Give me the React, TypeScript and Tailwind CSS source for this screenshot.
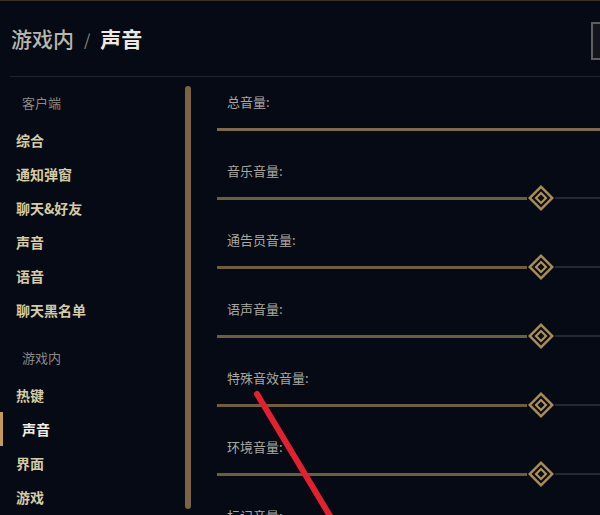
import React from "react";

const clientItems = ["综合", "通知弹窗", "聊天&好友", "声音", "语音", "聊天黑名单"];
const gameItems = ["热键", "声音", "界面", "游戏"];

// null = full track, thumb scrolled out of view
const sliders: { label: string; full?: boolean }[] = [
  { label: "总音量:", full: true },
  { label: "音乐音量:" },
  { label: "通告员音量:" },
  { label: "语声音量:" },
  { label: "特殊音效音量:" },
  { label: "环境音量:" },
  { label: "标记音量:" },
];

function Thumb() {
  return (
    <svg width="28" height="28" viewBox="0 0 28 28" className="shrink-0">
      <path d="M14 1 L27 14 L14 27 L1 14 Z" fill="#a98c55" />
      <path d="M14 4.5 L23.5 14 L14 23.5 L4.5 14 Z" fill="#0a0d14" />
      <path d="M14 7.5 L20.5 14 L14 20.5 L7.5 14 Z" fill="#b0935a" />
      <path d="M14 10.5 L17.5 14 L14 17.5 L10.5 14 Z" fill="#0a0d14" />
    </svg>
  );
}

function Slider({ full }: { full?: boolean }) {
  if (full) {
    return (
      <div className="flex h-[28px] items-center">
        <div className="h-[3px] flex-1 bg-[#7d6c4a]" />
      </div>
    );
  }
  return (
    <div className="flex h-[28px] items-center">
      <div className="h-[3px] w-[310px] bg-[#6e5e3e]" />
      <Thumb />
      <div className="h-[2px] flex-1 bg-[#242933]" />
    </div>
  );
}

function NavItem({ label, active }: { label: string; active?: boolean }) {
  return (
    <div className="relative flex h-[34px] items-center">
      {active && <div className="absolute left-0 top-0 h-[34px] w-[3px] bg-[#c39a5a]" />}
      <span
        className={
          active
            ? "pl-[22px] text-[14px] font-bold text-[#efece3]"
            : "pl-[16px] text-[14px] font-bold text-[#d6cba3]"
        }
      >
        {label}
      </span>
    </div>
  );
}

function SectionHeader({ label }: { label: string }) {
  return (
    <div className="flex h-[34px] items-center pl-[22px] text-[13px] text-[#8b8a86]">{label}</div>
  );
}

export default function App() {
  return (
    <div
      className="relative h-[515px] w-[600px] overflow-hidden border-t border-[#3b3222] bg-[#050a14]"
      style={{ fontFamily: '"Noto Sans CJK SC", "Noto Sans", sans-serif' }}
    >
      {/* header */}
      <div className="flex h-[75px] items-center">
        <div className="flex items-center pl-[11px]">
          <span className="text-[21px] font-medium text-[#b9b6ad]">游戏内</span>
          <span className="px-[10px] text-[16px] text-[#8e8c86]">/</span>
          <span className="text-[21px] font-bold text-[#ece9e0]">声音</span>
        </div>
        <div className="ml-auto mt-[5px] h-[38px] w-[9px] border-y-2 border-l-2 border-[#5f5f62] bg-[#12151c]" />
      </div>
      <div className="ml-[10px] h-px bg-[#1d2431]" />

      <div className="flex">
        {/* sidebar */}
        <div className="flex w-[217px]">
          <div className="w-[185px] pt-[9px]">
            <SectionHeader label="客户端" />
            <div className="mt-[3px]">
              {clientItems.map((item) => (
                <NavItem key={item} label={item} />
              ))}
            </div>
            <div className="mt-[14px]">
              <SectionHeader label="游戏内" />
            </div>
            <div className="mt-[3px]">
              {gameItems.map((item) => (
                <NavItem key={item} label={item} active={item === "声音"} />
              ))}
            </div>
          </div>
          <div className="mt-[9px] h-[423px] w-[6px] rounded-full bg-[#7a6442]" />
        </div>

        {/* volume sliders */}
        <div className="flex-1">
          {sliders.map((s) => (
            <div key={s.label} className="h-[69px]">
              <div className="pl-[10px] pt-[16px] text-[13px] leading-[18px] text-[#a9a7a1]">{s.label}</div>
              <div className="mt-[4px]">
                <Slider full={s.full} />
              </div>
            </div>
          ))}
        </div>
      </div>

      {/* red annotation stroke */}
      <svg className="pointer-events-none absolute left-0 top-0" width="600" height="515">
        <line x1="257" y1="393" x2="333" y2="520" stroke="#e3202f" strokeWidth="6" strokeLinecap="round" />
      </svg>
    </div>
  );
}
